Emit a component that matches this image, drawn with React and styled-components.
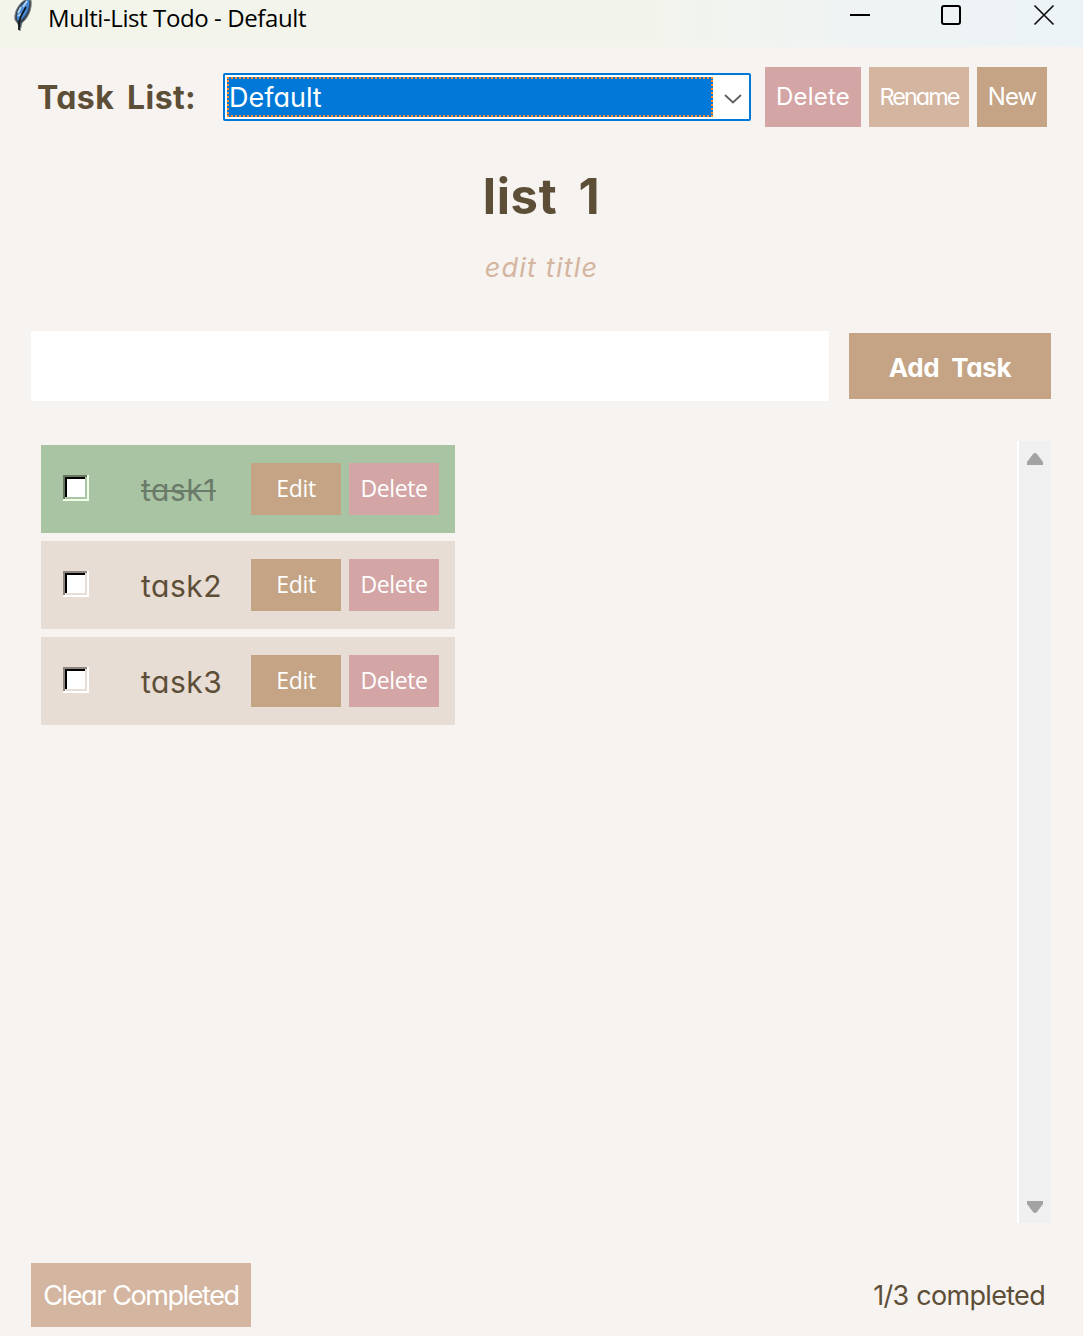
import React, { useState } from "react";
import styled, { createGlobalStyle, css } from "styled-components";

const palette = {
  background: "#f7f3f0",
  row: "#e8ddd4",
  done: "#a8c4a2",
  doneText: "#6b7b6a",
  text: "#5d4e37",
  tan: "#c4a484",
  sand: "#d4b5a0",
  rose: "#d4a5a5",
};

const comic = css`
  font-family: Inter, "Noto Sans", sans-serif;
  font-feature-settings: "cv11" 1;
`;

const GlobalStyle = createGlobalStyle`
  * { box-sizing: border-box; }
  body { margin: 0; background: ${palette.background}; }
`;

const Window = styled.div`
  width: 1083px;
  height: 1336px;
  display: flex;
  flex-direction: column;
  overflow: hidden;
  background: ${palette.background};
  color: ${palette.text};
  ${comic}
`;

const TitleBar = styled.header`
  height: 47px;
  flex: none;
  display: flex;
  align-items: flex-start;
  padding: 0 28px 0 13px;
  background: linear-gradient(90deg, #f3f4ea 0%, #f2f4ec 60%, #eff3f3 78%, #ecf3f6 100%);
`;

const WindowTitle = styled.div`
  flex: 1;
  margin-left: 15px;
  color: #000;
  font: 24px/35px "Open Sans", sans-serif;
  font-feature-settings: normal;
  letter-spacing: -0.4px;
`;

const WindowControls = styled.div`
  display: flex;
  gap: 70px;
  padding-top: 4px;
`;

const Label = styled.span`
  font-size: ${(p) => p.$size}px;
  font-weight: ${(p) => p.$weight || 400};
  font-style: ${(p) => (p.$italic ? "italic" : "normal")};
  letter-spacing: ${(p) => p.$track || 0}px;
  word-spacing: ${(p) => p.$word || 0}px;
  line-height: 1.2;
  padding-top: ${(p) => p.$drop || 0}px;
  white-space: pre;
`;

const ListBar = styled.div`
  display: flex;
  align-items: center;
  height: 60px;
  margin-top: 20px;
  padding: 0 36px 0 37px;
`;

const ListBarLabel = styled.div`
  width: 186px;
  display: flex;
`;

const Combo = styled.div`
  width: 528px;
  height: 48px;
  display: flex;
  margin-right: 14px;
  padding: 2px;
  border: 2px solid #0078d7;
  border-radius: 2px;
  background: #fff;
`;

const ComboValue = styled.div`
  width: 486px;
  display: flex;
  align-items: center;
  border: 2px dotted #ff8728;
  background: #0078d7;
  color: #fff;
`;

const ComboArrow = styled.div`
  flex: 1;
  display: grid;
  place-items: center;
  padding: 3px 0 0 5px;
`;

const Button = styled.button`
  width: ${(p) => p.$width}px;
  height: ${(p) => p.$height}px;
  flex: none;
  display: flex;
  align-items: center;
  justify-content: center;
  padding: 0;
  border: 0;
  background: ${(p) => palette[p.$tone]};
  color: #fff;
  ${comic}
`;

const ButtonGroup = styled.div`
  display: flex;
  gap: 8px;
`;

const Heading = styled.div`
  height: 204px;
  display: flex;
  flex-direction: column;
  align-items: center;
  padding-top: 41px;
  h1 { margin: 0; line-height: 60px; display: flex; }
`;

const EditTitle = styled.div`
  margin-top: 25px;
  display: flex;
  color: ${palette.sand};
`;

const AddRow = styled.form`
  display: flex;
  align-items: center;
  gap: 20px;
  padding-left: 31px;
`;

const TaskInput = styled.input`
  width: 798px;
  height: 70px;
  padding: 0 16px;
  border: 0;
  outline: 0;
  background: #fff;
  color: ${palette.text};
  font-size: 28px;
  ${comic}
`;

const ListArea = styled.main`
  height: 782px;
  flex: none;
  display: flex;
  justify-content: space-between;
  margin: 40px 32px 0 41px;
`;

const Tasks = styled.div`
  display: flex;
  flex-direction: column;
  gap: 8px;
  padding-top: 4px;
`;

const TaskRow = styled.div`
  width: 414px;
  height: 88px;
  display: flex;
  align-items: center;
  padding: 0 16px 0 22px;
  background: ${(p) => (p.$done ? palette.done : palette.row)};
`;

const CheckBox = styled.div`
  width: 26px;
  height: 26px;
  margin-top: -2px;
  background: #fff;
  box-shadow:
    inset -2px -2px ${(p) => (p.$done ? "#f0ffe6" : "#fff")},
    inset 2px 2px ${(p) => (p.$done ? "#66765f" : "#8c857f")},
    inset -4px -4px ${(p) => (p.$done ? palette.done : palette.row)},
    inset 4px 4px #000;
`;

const TaskText = styled.div`
  width: 110px;
  display: flex;
  margin: 2px 0 0 52px;
  color: ${(p) => (p.$done ? palette.doneText : palette.text)};
  text-decoration: ${(p) => (p.$done ? "line-through 2px" : "none")};
`;

const SystemText = styled(Label)`
  font-family: "Open Sans", sans-serif;
  font-feature-settings: normal;
`;

const Scrollbar = styled.div`
  width: 34px;
  display: flex;
  flex-direction: column;
  align-items: center;
  justify-content: space-between;
  padding: 12px 0 10px;
  border-left: 2px solid #fff;
  background: #f0f0f0;
`;

const Footer = styled.footer`
  display: flex;
  align-items: center;
  justify-content: space-between;
  margin: 40px 38px 0 31px;
`;

const Feather = () => (
  <svg width="20" height="34" viewBox="0 0 20 34">
    <path d="M18 0C19 7 17 14 12 20L9 23L7 31L5 24L2 20C1 13 4 7 9 2L12 0Z" fill="#384552" stroke="#8a8d8b" strokeWidth="1" />
    <path d="M16 0C17 7 14 14 9 19L5 21C2 17 5 9 10 4L14 0Z" fill="#4688d8" />
    <path d="M14 1L10 7M8 7L5 13M5 16L8 14" stroke="#b5d4ee" strokeWidth="1.7" fill="none" />
    <path d="M13 7L8 16L6 22V30" stroke="#10151b" strokeWidth="1.7" fill="none" />
  </svg>
);

const tasks = [
  { name: "task1", done: true },
  { name: "task2", done: false },
  { name: "task3", done: false },
];

export default function App() {
  const [draft, setDraft] = useState("");
  return (
    <Window>
      <GlobalStyle />
      <TitleBar>
        <Feather />
        <WindowTitle>Multi-List Todo - Default</WindowTitle>
        <WindowControls>
          <svg width="22" height="22"><path d="M1 11H21" stroke="#000" strokeWidth="2" /></svg>
          <svg width="22" height="22"><rect x="1" y="2" width="18" height="18" rx="2" fill="none" stroke="#000" strokeWidth="2" /></svg>
          <svg width="22" height="22"><path d="M1.5 1.5L20.5 20.5M20.5 1.5L1.5 20.5" stroke="#111" strokeWidth="1.7" /></svg>
        </WindowControls>
      </TitleBar>

      <ListBar>
        <ListBarLabel><Label $size={32} $weight={700} $track={0.4} $word={5} $drop={2}>Task List:</Label></ListBarLabel>
        <Combo>
          <ComboValue><Label $size={27} $drop={2}>Default</Label></ComboValue>
          <ComboArrow>
            <svg width="18" height="12"><path d="M1 2L9 9.5L17 2" fill="none" stroke="#606060" strokeWidth="1.8" /></svg>
          </ComboArrow>
        </Combo>
        <ButtonGroup>
          <Button $width={96} $height={60} $tone="rose"><Label $size={24} $track={0.2}>Delete</Label></Button>
          <Button $width={100} $height={60} $tone="sand"><Label $size={23.5} $track={-2}>Rename</Label></Button>
          <Button $width={70} $height={60} $tone="tan"><Label $size={24} $track={-1}>New</Label></Button>
        </ButtonGroup>
      </ListBar>

      <Heading>
        <h1><Label $size={49} $weight={700} $track={0.6} $word={9}>list 1</Label></h1>
        <EditTitle><Label $size={27} $italic $track={1.2}>edit title</Label></EditTitle>
      </Heading>

      <AddRow onSubmit={(e) => e.preventDefault()}>
        <TaskInput value={draft} onChange={(e) => setDraft(e.target.value)} />
        <Button $width={202} $height={66} $tone="tan"><Label $size={26} $weight={700} $track={-0.3} $word={6} $drop={4}>Add Task</Label></Button>
      </AddRow>

      <ListArea>
        <Tasks>
          {tasks.map((task) => (
            <TaskRow key={task.name} $done={task.done}>
              <CheckBox $done={task.done} />
              <TaskText $done={task.done}><Label $size={30} $track={0.5}>{task.name}</Label></TaskText>
              <ButtonGroup>
                <Button type="button" $width={90} $height={52} $tone="tan"><SystemText $size={23} $track={-0.3}>Edit</SystemText></Button>
                <Button type="button" $width={90} $height={52} $tone="rose"><SystemText $size={23} $track={-0.4}>Delete</SystemText></Button>
              </ButtonGroup>
            </TaskRow>
          ))}
        </Tasks>
        <Scrollbar>
          <svg width="16" height="12"><path d="M0 12V9L6 1Q8 -1 10 1L16 9V12Z" fill="#a3a3a3" /></svg>
          <svg width="16" height="12"><path d="M0 0V3L6 11Q8 13 10 11L16 3V0Z" fill="#a3a3a3" /></svg>
        </Scrollbar>
      </ListArea>

      <Footer>
        <Button $width={220} $height={64} $tone="sand"><Label $size={27} $track={-1.4} $word={1} $drop={2}>Clear Completed</Label></Button>
        <Label $size={27} $track={-0.7} $word={1} $drop={2}>1/3 completed</Label>
      </Footer>
    </Window>
  );
}
